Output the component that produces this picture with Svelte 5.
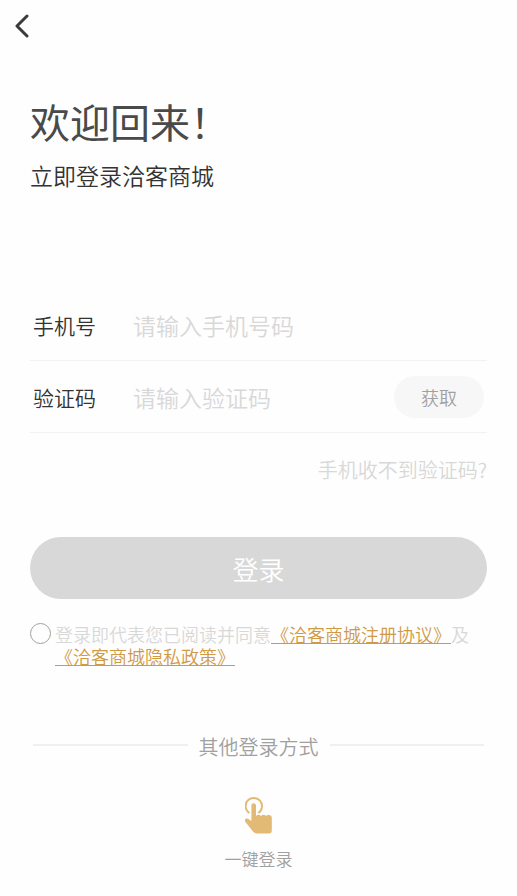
<script>
    let phone = '';
    let code = '';
    let agreed = false;

    function submit() {
        if (!phone.trim() || !code.trim() || !agreed) return;
    }
</script>

<div class="page">

    <header class="nav">
        <button class="back" type="button" aria-label="返回">
            <svg viewBox="0 0 14 24" width="14" height="24">
                <path d="M12 2 L2 12 L12 22" />
            </svg>
        </button>
    </header>

    <main>

        <h1>欢迎回来！</h1>
        <p class="subtitle">立即登录洽客商城</p>

        <form on:submit|preventDefault={submit}>

            <div class="row">
                <label for="phone">手机号</label>
                <input
                    id="phone"
                    bind:value={phone}
                    type="tel"
                    autocomplete="off"
                    placeholder="请输入手机号码"
                />
            </div>

            <div class="row">
                <label for="code">验证码</label>
                <input
                    id="code"
                    bind:value={code}
                    type="text"
                    autocomplete="off"
                    placeholder="请输入验证码"
                />
                <button class="fetch" type="button">获取</button>
            </div>

            <a class="help" href="#help">手机收不到验证码?</a>

            <button class="submit" type="submit">登录</button>

            <div class="agreement">
                <input id="agree" type="checkbox" bind:checked={agreed} />
                <p>
                    <label for="agree">登录即代表您已阅读并同意</label><a href="#terms">《洽客商城注册协议》</a>及<a href="#privacy">《洽客商城隐私政策》</a>
                </p>
            </div>

        </form>

        <section class="other">
            <h2>其他登录方式</h2>

            <button class="quick" type="button">
                <svg viewBox="0 0 28 38" width="28" height="38">
                    <path class="ring" d="M4.4 17 A8.2 8.2 0 1 1 13.2 17" />
                    <path
                        class="hand"
                        d="M6.4 9.6 a2.3 2.3 0 0 1 4.6 0 V20 C12.4 18.4 14.6 18.4 16 20 C17.4 18.4 19.6 18.4 21 20 C22.4 18.4 26.8 18.6 26.8 21.6 V34.4 a3 3 0 0 1 -3 3 H11.4 a4 4 0 0 1 -3.2 -1.6 L0.4 26 C-0.8 24 0.2 22.4 2 22.4 C3.6 22.4 4.8 24.2 6.4 25 Z"
                    />
                </svg>
                <span>一键登录</span>
            </button>
        </section>

    </main>

</div>

<style>

:global(body){

    margin:0;

    background:#fefefe;

}

.page{

    font-family:"Noto Sans CJK SC", sans-serif;
    font-weight:350;

    color:#333;

}

button,
input{

    margin:0;
    padding:0;

    border:0;

    background:none;

    font-family:inherit;
    font-weight:inherit;

}

button{

    cursor:pointer;

}

.nav{

    display:flex;
    align-items:center;

    height:52px;

    padding:0 15px;

}

.back{

    display:flex;

}

.back path{

    fill:none;

    stroke:#3a3a3c;
    stroke-width:3;
    stroke-linecap:round;
    stroke-linejoin:round;

}

main{

    padding:39px 30px 24px;

}

h1{

    margin:0;

    color:#4a4a4a;

    font-size:40px;
    font-weight:400;
    line-height:60px;

}

.subtitle{

    margin:8px 0 0;

    font-size:23px;
    line-height:32px;

}

form{

    margin-top:98px;

}

.row{

    display:flex;
    align-items:center;

    height:72px;

    padding:0 3px;

    border-bottom:1px solid #f2f2f2;

    box-sizing:border-box;

}

.row label{

    width:100px;

    font-size:21px;

}

.row input{

    flex:1;

    min-width:0;
    height:48px;

    outline:none;

    color:#333;

    font-size:23px;

}

.row input::placeholder{

    color:#d8d8d8;

    opacity:1;

}

.fetch{

    width:90px;
    height:42px;

    border-radius:21px;

    background:#f7f7f7;

    color:#a0a0a0;

    font-size:18px;

}

.help{

    display:block;

    margin-top:22px;

    color:#d8d8d8;

    font-size:20px;
    line-height:30px;
    text-align:right;
    text-decoration:none;

}

.submit{

    display:block;

    width:100%;
    height:62px;

    margin-top:52px;

    border-radius:31px;

    background:#d8d8d8;

    color:#fff;

    font-size:26px;

}

.agreement{

    display:flex;
    align-items:flex-start;

    gap:4px;

    margin-top:24px;

}

.agreement input{

    flex:none;

    width:21px;
    height:21px;

    border:1px solid #a0a0a0;
    border-radius:50%;

    appearance:none;

}

.agreement input:checked{

    border-color:#d09a45;

    background:#d09a45;

}

.agreement p{

    margin:0;

    color:#d8d8d8;

    font-size:18px;
    line-height:22px;

}

.agreement label,
.agreement a{

    display:inline-block;

}

.agreement a{

    color:#d09a45;

}

.other{

    display:flex;
    flex-direction:column;
    align-items:center;

    margin-top:65px;

}

h2{

    display:flex;
    align-items:center;
    align-self:stretch;

    gap:11px;

    margin:0;
    padding:0 3px;

    color:#a0a0a0;

    font-size:20px;
    font-weight:inherit;
    line-height:30px;

}

h2::before,
h2::after{

    content:"";

    flex:1;

    height:2px;
    margin-bottom:4px;

    background:#f0f0f0;

}

.quick{

    display:flex;
    flex-direction:column;
    align-items:center;

    gap:12px;

    margin-top:34px;

    color:#a0a0a0;

    font-size:17px;
    line-height:26px;

}

.ring{

    fill:none;

    stroke:#e2ba76;
    stroke-width:2;

}

.hand{

    fill:#e2ba76;

}

</style>
